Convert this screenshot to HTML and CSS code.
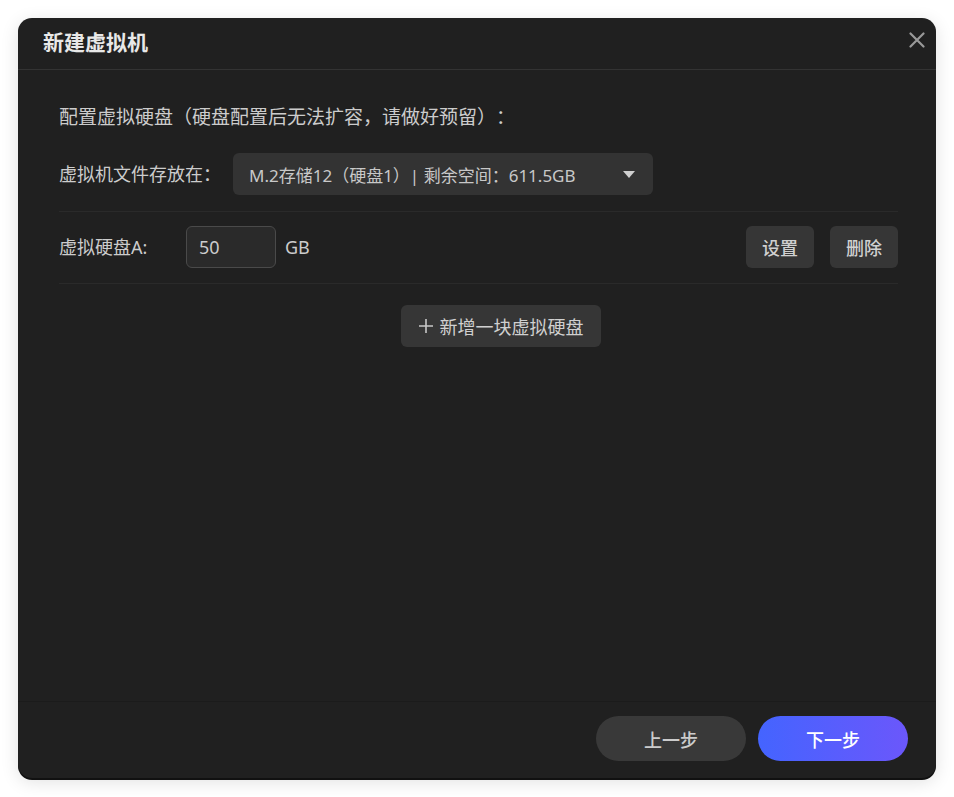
FILE: index.html
```html
<!DOCTYPE html>
<html lang="zh-CN">
<head>
<meta charset="utf-8">
<title>新建虚拟机</title>
<link rel="stylesheet" href="styles.css">
</head>
<body>
<div class="dialog">
  <div class="header">
    <div class="title">新建虚拟机</div>
    <button class="close" aria-label="关闭">
      <svg width="16" height="16" viewBox="0 0 16 16"><path d="M1.5 1.5 L14.5 14.5 M14.5 1.5 L1.5 14.5" stroke="#999999" stroke-width="2.2" stroke-linecap="round" fill="none"/></svg>
    </button>
  </div>
  <div class="body">
    <div class="intro">配置虚拟硬盘（硬盘配置后无法扩容，请做好预留）：</div>
    <div class="loc-row">
      <span class="label">虚拟机文件存放在：</span>
      <div class="select">
        <span>M.2存储12（硬盘1）| 剩余空间：611.5GB</span>
        <svg class="caret" width="12" height="7" viewBox="0 0 12 7"><path d="M0 0 H12 L6 7 Z" fill="#cfcfcf"/></svg>
      </div>
    </div>
    <div class="disk-row">
      <span class="label disk-label">虚拟硬盘A:</span>
      <div class="input">50</div>
      <span class="unit">GB</span>
      <div class="spacer"></div>
      <button class="btn small">设置</button>
      <button class="btn small">删除</button>
    </div>
    <div class="add-wrap">
      <button class="btn add"><svg class="plus" width="14" height="14" viewBox="0 0 14 14"><path d="M7 0 V14 M0 7 H14" stroke="#c8c8c8" stroke-width="1.6" fill="none"/></svg>新增一块虚拟硬盘</button>
    </div>
  </div>
  <div class="footer">
    <button class="pill prev">上一步</button>
    <button class="pill next">下一步</button>
  </div>
</div>
</body>
</html>
```

FILE: styles.css
```css
* { box-sizing: border-box; }
html, body { margin: 0; padding: 0; background: #ffffff; }
body {
  font-family: "Noto Sans", "Noto Sans CJK SC", sans-serif;
  padding: 18px;
  text-spacing-trim: space-all;
}
.dialog {
  width: 918px;
  height: 760px;
  background: #202020;
  border-radius: 14px;
  display: flex;
  flex-direction: column;
  box-shadow: 0 2px 0 #111111, 0 4px 18px rgba(0, 0, 0, 0.12);
  overflow: hidden;
}
.header {
  height: 52px;
  border-bottom: 1px solid #333333;
  display: flex;
  align-items: center;
  padding: 0 11px 0 25px;
  flex: none;
}
.title {
  flex: 1;
  color: #e8e8e8;
  font-size: 21px;
  font-weight: 700;
  line-height: 24px;
  margin-top: -4px;
}
.close {
  background: none;
  border: none;
  padding: 0;
  width: 16px;
  height: 16px;
  margin-top: -7px;
  display: flex;
  cursor: pointer;
}
.body {
  flex: 1;
  padding: 35px 38px 0 41px;
  display: flex;
  flex-direction: column;
}
.intro {
  color: #cccccc;
  font-size: 19px;
  line-height: 24px;
}
.label {
  color: #cccccc;
  font-size: 18px;
  line-height: 24px;
}
.loc-row {
  margin-top: 24px;
  display: flex;
  align-items: center;
  padding-bottom: 16px;
  border-bottom: 1px solid #2a2a2a;
}
.select {
  margin-left: 12px;
  width: 420px;
  height: 42px;
  background: #333333;
  border-radius: 6px;
  display: flex;
  align-items: center;
  justify-content: space-between;
  padding: 0 18px 0 16px;
  color: #c8c8c8;
  font-size: 17px;
}
.caret { margin-top: 1px; }
.disk-row {
  display: flex;
  align-items: center;
  padding: 14px 0 15px;
  border-bottom: 1px solid #2a2a2a;
}
.disk-label { width: 127px; }
.input {
  width: 90px;
  height: 42px;
  border: 1px solid #4a4a4a;
  background: #2a2a2a;
  border-radius: 6px;
  color: #cccccc;
  font-size: 18px;
  display: flex;
  align-items: center;
  padding-left: 12px;
}
.unit {
  margin-left: 9px;
  color: #cccccc;
  font-size: 18px;
}
.spacer { flex: 1; }
.btn {
  font-family: inherit;
  border: none;
  background: #363636;
  color: #d0d0d0;
  border-radius: 6px;
  cursor: pointer;
}
.btn.small {
  width: 68px;
  height: 42px;
  font-size: 18px;
  font-weight: 500;
  margin-left: 16px;
  padding: 0;
}
.add-wrap {
  display: flex;
  justify-content: center;
  padding-top: 21px;
  padding-left: 45px;
}
.btn.add {
  width: 200px;
  height: 42px;
  font-size: 18px;
  display: flex;
  align-items: center;
  justify-content: center;
  padding: 0;
}
.plus {
  margin-right: 7px;
}
.footer {
  flex: none;
  height: 77px;
  border-top: 1px solid #1b1b1b;
  display: flex;
  justify-content: flex-end;
  align-items: flex-start;
  padding: 14px 28px 0 0;
  gap: 12px;
}
.pill {
  font-family: inherit;
  width: 150px;
  height: 45px;
  border-radius: 23px;
  border: none;
  font-size: 18px;
  font-weight: 500;
  cursor: pointer;
}
.prev {
  background: #393939;
  color: #cccccc;
}
.next {
  background: linear-gradient(90deg, #4464ff 0%, #6b57fb 100%);
  color: #ffffff;
}
```
